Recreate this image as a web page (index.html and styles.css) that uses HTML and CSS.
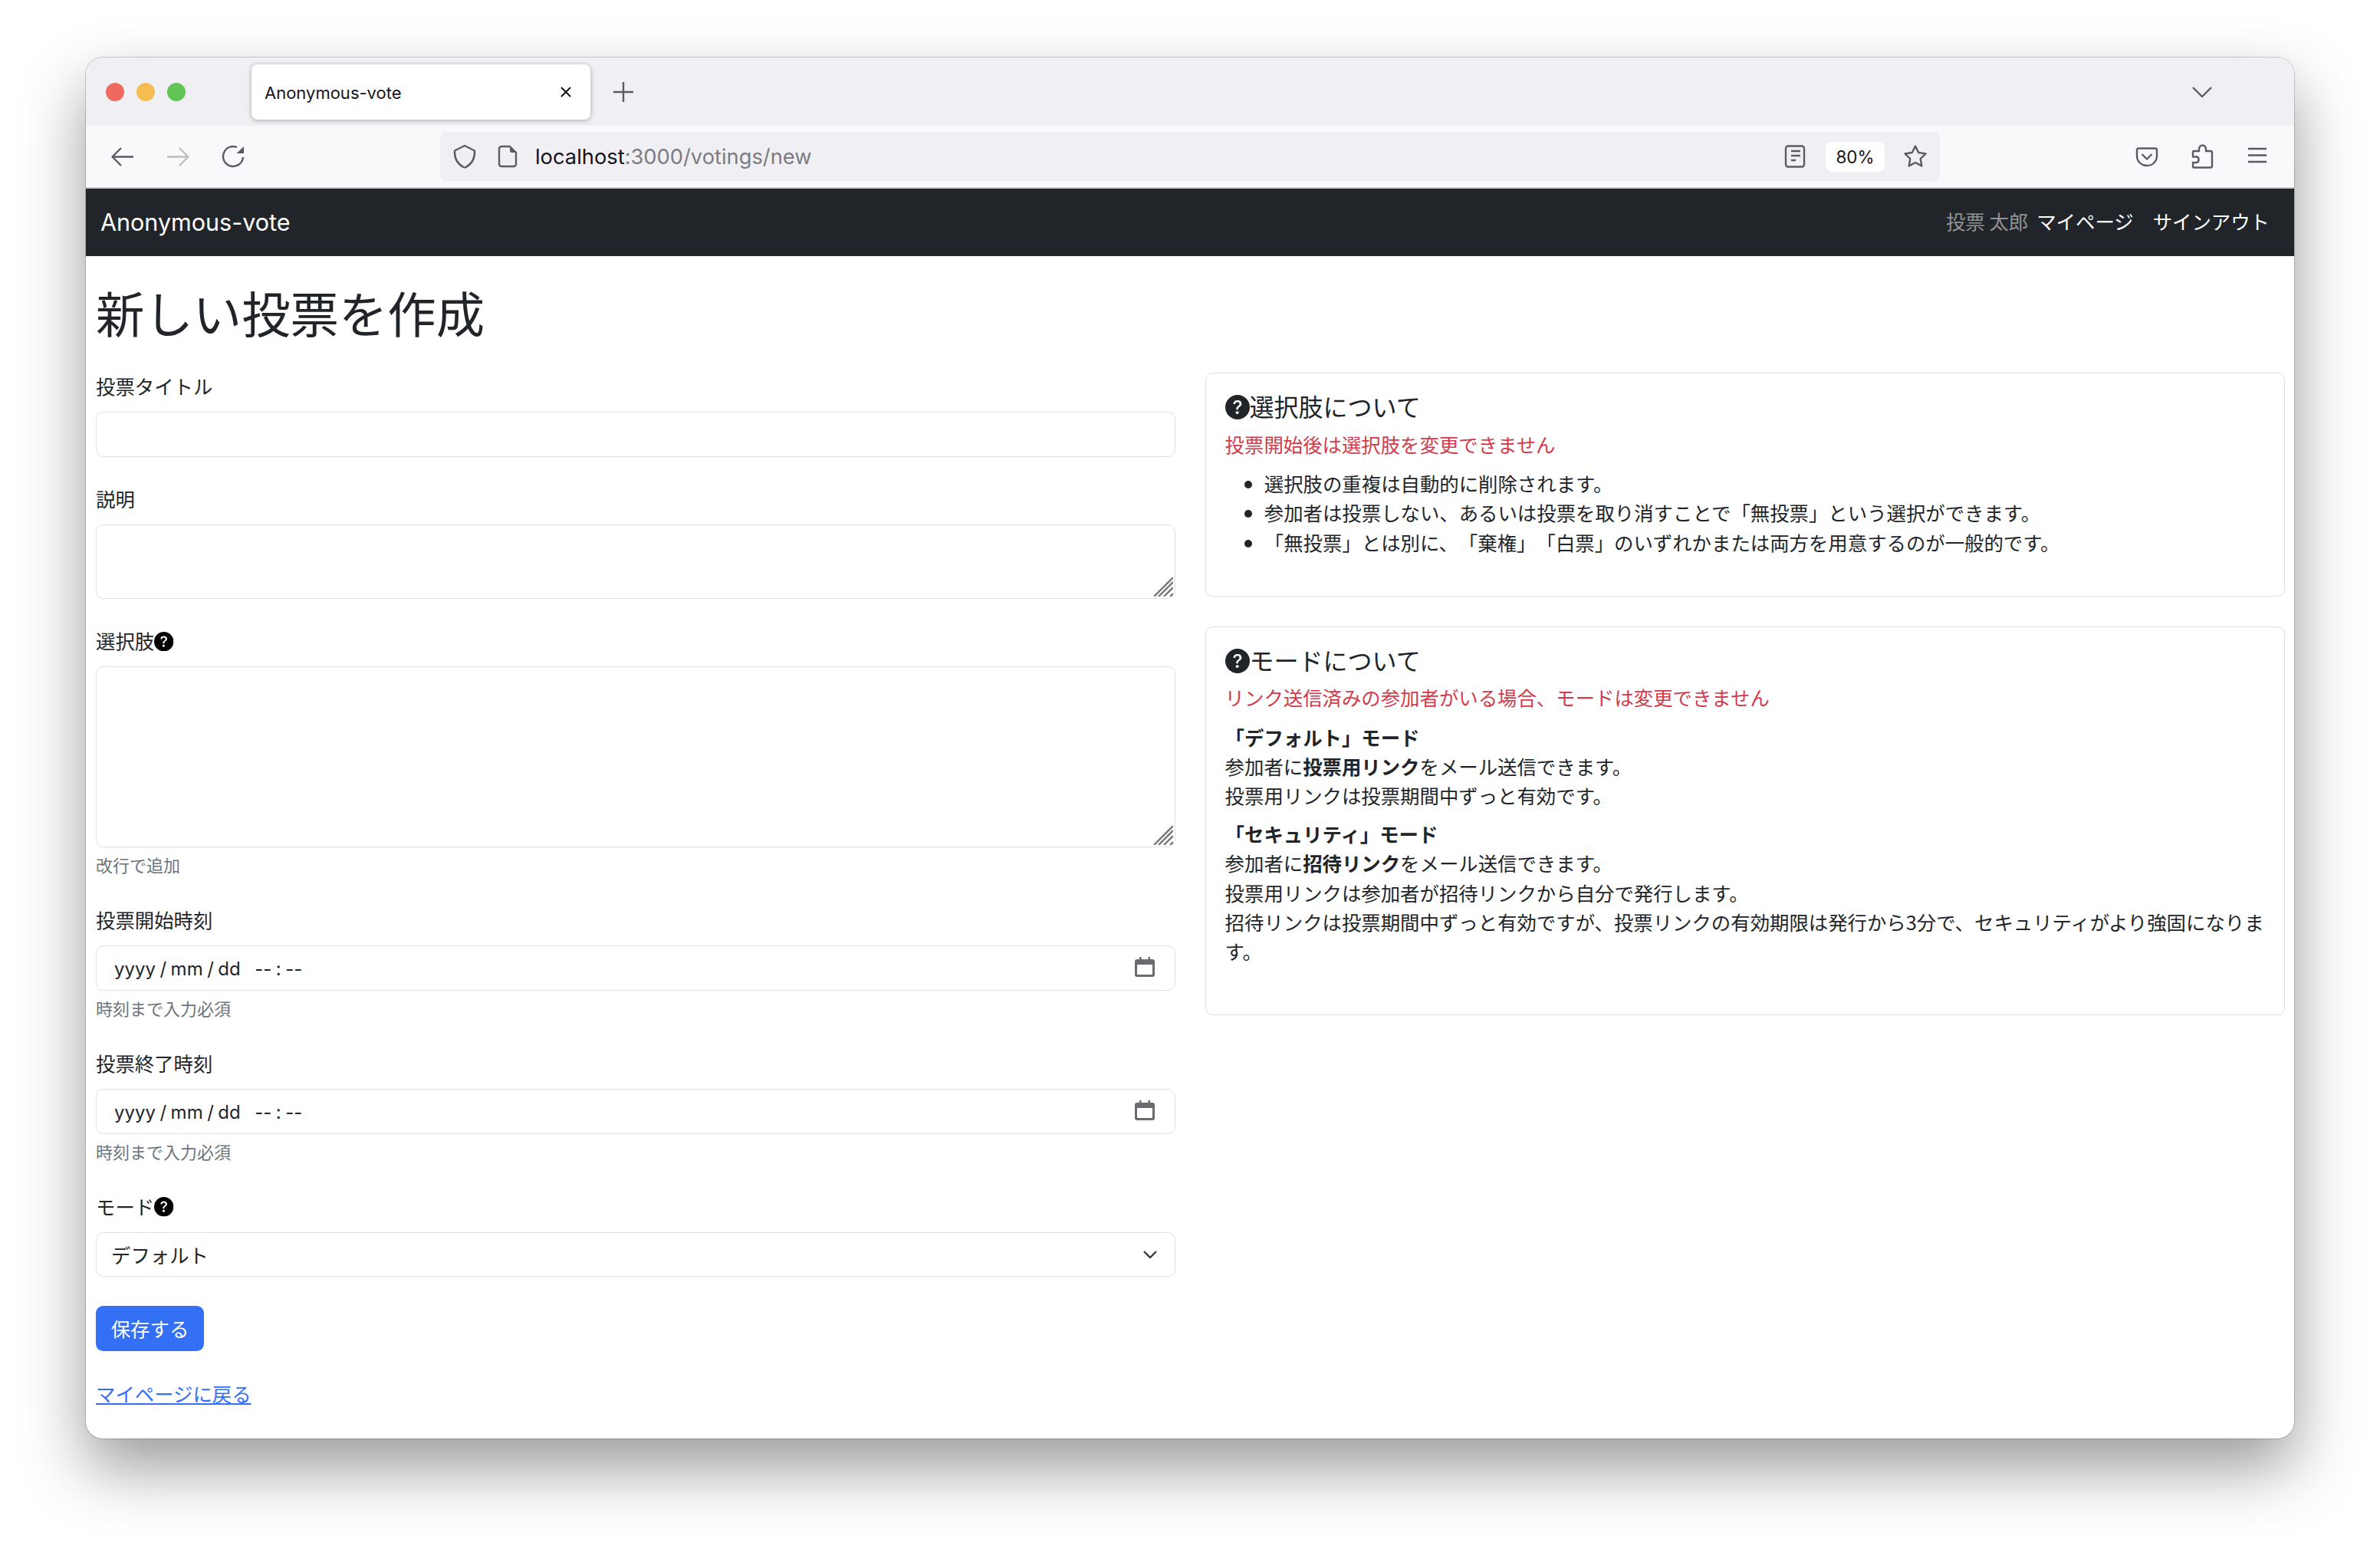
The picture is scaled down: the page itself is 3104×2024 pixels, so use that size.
FILE: index.html
```html
<!DOCTYPE html>
<html lang="ja">
<head>
    <meta charset="UTF-8">
    <meta name="viewport" content="width=device-width, initial-scale=1.0">
    <title>Anonymous-vote</title>
    <link rel="stylesheet" href="styles.css">
</head>
<body>
    <svg class="defs" width="0" height="0">
        <symbol id="question" viewBox="0 0 16 16">
            <path fill="currentColor" d="M16 8A8 8 0 1 1 0 8a8 8 0 0 1 16 0zM5.496 6.033h.825c.138 0 .248-.113.266-.25.09-.656.54-1.134 1.342-1.134.686 0 1.314.343 1.314 1.168 0 .635-.374.927-.965 1.371-.673.489-1.206 1.06-1.168 1.987l.003.217a.25.25 0 0 0 .25.246h.811a.25.25 0 0 0 .25-.25v-.105c0-.718.273-.927 1.01-1.486.609-.463 1.244-.977 1.244-2.056 0-1.511-1.276-2.241-2.673-2.241-1.267 0-2.655.59-2.75 2.286a.237.237 0 0 0 .241.247zm2.325 6.443c.61 0 1.029-.394 1.029-.927 0-.552-.42-.94-1.029-.94-.584 0-1.009.388-1.009.94 0 .533.425.927 1.01.927z"/>
        </symbol>
        <symbol id="calendar" viewBox="0 0 26 26">
            <path fill="currentColor" d="M6 0h2.5v3h9V0H20v3h3a3 3 0 0 1 3 3v17a3 3 0 0 1-3 3H3a3 3 0 0 1-3-3V6a3 3 0 0 1 3-3h3zM3 10v12a1 1 0 0 0 1 1h18a1 1 0 0 0 1-1V10z"/>
        </symbol>
        <symbol id="resizer" viewBox="0 0 25 25">
            <path stroke="#777" stroke-width="2.4" d="M0 25L25 0M6 25L25 6M13 25L25 13M21 25L25 21"/>
        </symbol>
    </svg>

    <div class="window">
        <!-- Tab strip -->
        <div class="tabbar">
            <span class="light red"></span>
            <span class="light yellow"></span>
            <span class="light green"></span>
            <div class="tab">
                <span class="tab-title">Anonymous-vote</span>
                <svg class="tab-close" viewBox="0 0 16 16"><path d="M2 2l12 12M14 2L2 14"/></svg>
            </div>
            <svg class="icon new-tab" viewBox="0 0 32 32"><path d="M16 3v26M3 16h26"/></svg>
            <svg class="icon tab-list" viewBox="0 0 32 32"><path d="M4 10l12 12 12-12"/></svg>
        </div>

        <!-- Browser toolbar -->
        <div class="toolbar">
            <svg class="icon" viewBox="0 0 32 32"><path d="M30 16.5H3M14 5L2.5 16.5 14 28"/></svg>
            <svg class="icon disabled" viewBox="0 0 32 32"><path d="M2 16.5h27M18 5l11.5 11.500L18 28"/></svg>
            <svg class="icon" viewBox="0 0 32 32"><path d="M21 4A13 13 0 1 0 29 17"/><path class="solid" d="M30 3v9h-9.5z"/></svg>
            <div class="urlbar">
                <svg class="icon" viewBox="0 0 32 32"><path d="M16 2l13 6.5c.5 10.500-4 17.500-11.500 21.500q-1.500.8-3 0C7 26 2.500 19 3 8.500z"/></svg>
                <svg class="icon" viewBox="0 0 32 32"><path d="M8 3h11l8 8v15a3 3 0 0 1-3 3H8a3 3 0 0 1-3-3V6a3 3 0 0 1 3-3z"/><path class="solid" d="M19 3l8 8h-6a2 2 0 0 1-2-2z"/></svg>
                <span class="url"><span class="url-host">localhost</span>:3000/votings/new</span>
                <svg class="icon" viewBox="0 0 32 32"><rect x="4" y="2.500" width="24" height="27" rx="3"/><path d="M11 9h12M11 15h12M11 21h6"/></svg>
                <span class="zoom-level">80%</span>
                <svg class="icon" viewBox="0 0 32 32"><path d="M16 2.500l4.200 8.500 9.300 1.400-6.800 6.600 1.600 9.400-8.300-4.400-8.300 4.400 1.600-9.400-6.800-6.600 9.300-1.400z"/></svg>
            </div>
            <div class="toolbar-right">
                <svg class="icon" viewBox="0 0 32 32"><path d="M5 5.500h22a2 2 0 0 1 2 2V15c0 8-6 13-13 13S3 23 3 15V7.500a2 2 0 0 1 2-2z"/><path d="M9.500 13l6.500 6.500 6.500-6.500"/></svg>
                <svg class="icon" viewBox="0 0 32 32"><path d="M5.500 9H12V6.500c0-3 2-5 4.500-5s4.500 2 4.500 5V9h6a2 2 0 0 1 2 2v17.500a2 2 0 0 1-2 2H5.500A1.500 1.500 0 0 1 4 29v-5h4.500c2 0 3-2 3-4s-1-3.500-3-3.500H4v-6A1.500 1.500 0 0 1 5.500 9z"/></svg>
                <svg class="icon" viewBox="0 0 32 32"><path d="M4 6h24M4 14.500h24M4 23h24"/></svg>
            </div>
        </div>

        <!-- Page -->
        <nav class="navbar">
            <a class="brand" href="#">Anonymous-vote</a>
            <div class="nav-right">
                <span class="nav-user">投票 太郎</span>
                <a href="#">マイページ</a>
                <a href="#">サインアウト</a>
            </div>
        </nav>

        <main class="page">
            <h1>新しい投票を作成</h1>
            <div class="columns">
                <form class="vote-form">
                    <div class="field">
                        <label for="title">投票タイトル</label>
                        <input class="control" type="text" id="title">
                    </div>
                    <div class="field">
                        <label for="description">説明</label>
                        <div class="textarea-wrap">
                            <textarea class="control area-short" id="description"></textarea>
                            <svg class="resizer"><use href="#resizer"/></svg>
                        </div>
                    </div>
                    <div class="field">
                        <label for="choices">選択肢<svg class="help"><use href="#question"/></svg></label>
                        <div class="textarea-wrap">
                            <textarea class="control area-tall" id="choices"></textarea>
                            <svg class="resizer"><use href="#resizer"/></svg>
                        </div>
                        <div class="form-text">改行で追加</div>
                    </div>
                    <div class="field">
                        <label>投票開始時刻</label>
                        <div class="control date-control">
                            <span>yyyy</span><span>/</span><span>mm</span><span>/</span><span>dd</span>
                            <span class="time-start">--</span><span>:</span><span>--</span>
                            <svg class="calendar"><use href="#calendar"/></svg>
                        </div>
                        <div class="form-text">時刻まで入力必須</div>
                    </div>
                    <div class="field">
                        <label>投票終了時刻</label>
                        <div class="control date-control">
                            <span>yyyy</span><span>/</span><span>mm</span><span>/</span><span>dd</span>
                            <span class="time-start">--</span><span>:</span><span>--</span>
                            <svg class="calendar"><use href="#calendar"/></svg>
                        </div>
                        <div class="form-text">時刻まで入力必須</div>
                    </div>
                    <div class="field">
                        <label for="mode">モード<svg class="help"><use href="#question"/></svg></label>
                        <div class="select-wrap">
                            <select class="control" id="mode">
                                <option>デフォルト</option>
                            </select>
                            <svg class="select-arrow" viewBox="0 0 18 10"><path d="M1 1l8 8 8-8"/></svg>
                        </div>
                    </div>
                    <button class="save-button" type="button">保存する</button>
                    <a class="back-link" href="#">マイページに戻る</a>
                </form>

                <aside class="help-column">
                    <section class="card">
                        <h5><svg class="help"><use href="#question"/></svg>選択肢について</h5>
                        <h6>投票開始後は選択肢を変更できません</h6>
                        <ul>
                            <li>選択肢の重複は自動的に削除されます。</li>
                            <li>参加者は投票しない、あるいは投票を取り消すことで「無投票」という選択ができます。</li>
                            <li>「無投票」とは別に、「棄権」「白票」のいずれかまたは両方を用意するのが一般的です。</li>
                        </ul>
                    </section>
                    <section class="card">
                        <h5><svg class="help"><use href="#question"/></svg>モードについて</h5>
                        <h6>リンク送信済みの参加者がいる場合、モードは変更できません</h6>
                        <p>
                            <strong>「デフォルト」モード</strong><br>
                            参加者に<strong>投票用リンク</strong>をメール送信できます。<br>
                            投票用リンクは投票期間中ずっと有効です。
                        </p>
                        <p class="last">
                            <strong>「セキュリティ」モード</strong><br>
                            参加者に<strong>招待リンク</strong>をメール送信できます。<br>
                            投票用リンクは参加者が招待リンクから自分で発行します。<br>
                            招待リンクは投票期間中ずっと有効ですが、投票リンクの有効期限は発行から3分で、セキュリティがより強固になります。
                        </p>
                    </section>
                </aside>
            </div>
        </main>
    </div>
</body>
</html>
```

FILE: styles.css
```css
/* Basic Reset */
* {
    margin: 0;
    padding: 0;
    box-sizing: border-box;
}

/* 80% zoom on a 2x screen, so 1rem is 25.6px */
html {
    font-size: 25.6px;
}

body {
    height: 2024px;
    padding: 75px 112px 0;
    overflow: hidden;
    background-color: #fff;
    color: #212529;
    font-family: "Noto Sans CJK JP", Inter, sans-serif;
    font-size: 25.4px;
    line-height: 38.4px;
    text-spacing-trim: space-all;
}

.defs {
    position: absolute;
}

/* Browser window */
.window {
    height: 1801px;
    overflow: hidden;
    border-radius: 22px;
    background-color: #fff;
    box-shadow: 0 0 0 1px rgba(0, 0, 0, 0.18), 0 38px 84px rgba(0, 0, 0, 0.4);
}

.icon {
    flex: none;
    width: 32px;
    height: 32px;
    fill: none;
    stroke: #5b5b66;
    stroke-width: 2.4;
    stroke-linejoin: round;
}

.icon .solid {
    fill: #5b5b66;
    stroke: none;
}

.icon.disabled {
    stroke: #bdbdc2;
}

/* Tab strip */
.tabbar {
    display: flex;
    align-items: center;
    height: 89px;
    padding-left: 26px;
    background-color: #f0f0f4;
}

.light {
    width: 24px;
    height: 24px;
    margin-right: 16px;
    border-radius: 50%;
}

.light.red { background-color: #ee6a5f; }
.light.yellow { background-color: #f5bd4f; }
.light.green { background-color: #61c454; }

.tab {
    display: flex;
    align-items: center;
    justify-content: space-between;
    width: 442px;
    height: 72px;
    margin-left: 70px;
    padding: 0 24px 0 17px;
    border-radius: 8px;
    background-color: #fff;
    box-shadow: 0 1px 6px rgba(0, 0, 0, 0.3);
}

.tab-title {
    padding-top: 3px;
    font-family: Inter, sans-serif;
    font-size: 22px;
    color: #15141a;
}

.tab-close {
    width: 16px;
    height: 16px;
    fill: none;
    stroke: #15141a;
    stroke-width: 2;
}

.new-tab {
    margin-left: 27px;
}

.tab-list {
    margin-left: auto;
    margin-right: 104px;
}

/* Toolbar */
.toolbar {
    display: flex;
    align-items: center;
    gap: 40px;
    height: 82px;
    padding: 0 32px;
    border-bottom: 2px solid #ccc;
    background-color: #f9f9fb;
}

.urlbar {
    display: flex;
    align-items: center;
    gap: 24px;
    width: 1956px;
    height: 64px;
    margin-left: 214px;
    padding: 0 16px;
    border-radius: 8px;
    background-color: #f0f0f4;
}

.url {
    flex: 1;
    margin-left: -4px;
    padding-top: 3px;
    font-family: Inter, sans-serif;
    font-size: 27.3px;
    color: #7b7b83;
}

.url-host {
    color: #15141a;
}

.zoom-level {
    width: 77px;
    height: 39px;
    border-radius: 8px;
    background-color: #fff;
    font-family: Inter, sans-serif;
    font-size: 22.4px;
    line-height: 39px;
    text-align: center;
    color: #15141a;
}

.toolbar-right {
    display: flex;
    gap: 40px;
    margin-left: auto;
}

/* Navbar */
.navbar {
    display: flex;
    align-items: center;
    justify-content: space-between;
    height: 88px;
    padding: 0 32px 0 19px;
    background-color: #212529;
}

.navbar a {
    color: #fff;
    text-decoration: none;
}

.brand {
    font-family: Inter, sans-serif;
    font-size: 30.5px;
}

.nav-right {
    display: flex;
    gap: 25px;
    padding-bottom: 3px;
}

.nav-user {
    margin-right: -14px;
    color: rgba(255, 255, 255, 0.5);
}

/* Page */
.page {
    padding: 34px 12px 0 13px;
}

h1 {
    margin-bottom: 41px;
    font-size: 63.4px;
    font-weight: 400;
    line-height: 76.8px;
}

.columns {
    display: grid;
    grid-template-columns: 1fr 1fr;
    gap: 39px;
}

/* Form */
.field {
    margin-bottom: 37px;
}

label {
    display: block;
    margin-top: -2px;
    margin-bottom: 14.8px;
}

.help {
    width: 1em;
    height: 1em;
    vertical-align: -0.125em;
}

label .help {
    color: #000;
}

.control {
    display: block;
    width: 100%;
    height: 58.6px;
    padding: 0.375rem 0.75rem;
    border: 1px solid #dee2e6;
    border-radius: 0.375rem;
    background-color: #fff;
    color: #212529;
    font: inherit;
    outline: none;
}

textarea.control {
    resize: none;
}

.area-short {
    height: 97px;
}

.area-tall {
    height: 236px;
}

.textarea-wrap,
.select-wrap {
    position: relative;
}

.resizer {
    position: absolute;
    right: 3px;
    bottom: 3px;
    width: 25px;
    height: 25px;
}

.form-text {
    margin-top: 0.25rem;
    font-size: 22px;
    line-height: 33.6px;
    color: #6c757d;
}

.date-control {
    display: flex;
    align-items: center;
    gap: 5.5px;
    padding-top: 12px;
    padding-bottom: 8px;
    padding-left: 23px;
    padding-right: 26px;
    font-family: Inter, sans-serif;
    font-size: 24px;
}

.time-start {
    margin-left: 13px;
}

.calendar {
    width: 26px;
    height: 26px;
    margin-left: auto;
    margin-top: -6px;
    color: #6a6a6f;
}

select.control {
    appearance: none;
    padding-left: 19px;
}

.select-arrow {
    position: absolute;
    top: 24px;
    right: 24px;
    width: 18px;
    height: 10px;
    fill: none;
    stroke: #343a40;
    stroke-width: 2.4;
}

.save-button {
    display: block;
    height: 58.6px;
    padding: 0 0.75rem;
    margin-top: 38px;
    width: 141px;
    border: none;
    border-radius: 0.375rem;
    background-color: #3370f5;
    color: #fff;
    font: inherit;
}

.back-link {
    display: inline-block;
    margin-top: 36px;
    color: #3370f5;
}

/* Help cards */
.card {
    margin-bottom: 38.4px;
    padding: 23.6px 18px 1rem 24.6px;
    border: 1px solid #dfdfdf;
    border-radius: 0.375rem;
}

h5 {
    margin-bottom: 10.8px;
    font-size: 32px;
    font-weight: 400;
    line-height: 38.4px;
}

h6 {
    margin-bottom: 0.5rem;
    font-size: 25.4px;
    font-weight: 400;
    line-height: 38.4px;
    color: #d13b4b;
}

.card ul {
    margin-bottom: 1rem;
    padding-left: 2rem;
}

.card p {
    margin-bottom: 11px;
}

.card p.last {
    margin-bottom: 38px;
}
```
